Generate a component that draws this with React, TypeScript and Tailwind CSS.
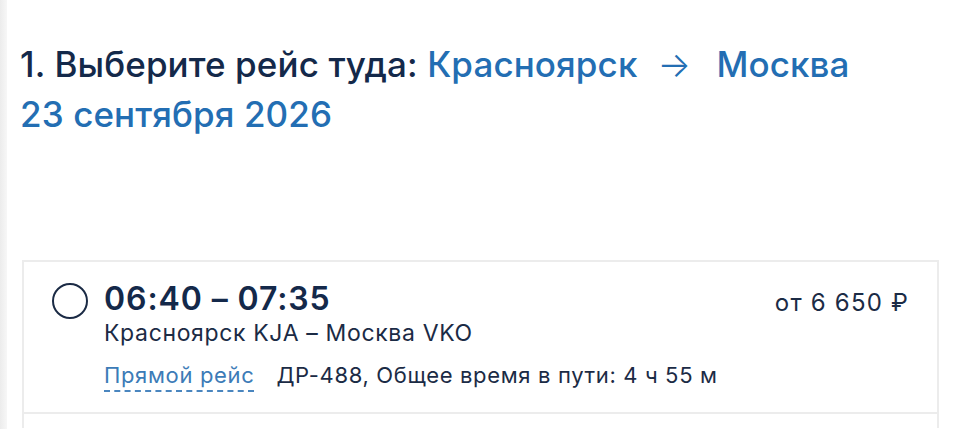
export default function App() {
  return (
    <div
      className="flex min-h-screen bg-white"
      style={{ fontFamily: "Inter, 'Noto Sans', sans-serif" }}
    >
      {/* left edge shade */}
      <div className="w-[7px] shrink-0 bg-gradient-to-r from-[#ececec] to-[#f7f7f7]"></div>

      <main className="flex-1 pl-[13px] pr-[21px] pt-[39px]">
        <h1 className="text-[35px] leading-[50px] font-medium tracking-[0.1px] text-[#14294a]">
          1. Выберите рейс туда:{" "}
          <span className="text-[#236eb3]">
            Красноярск
            <span className="ml-[20px] mr-[16px] font-light">→</span>
            &nbsp;Москва
          </span>
          <br />
          <span className="text-[#236eb3]">23 сентября 2026</span>
        </h1>

        <div className="mt-[121px] ml-[2px] border-2 border-b-0 border-[#ececec]">
          <div className="flex items-start justify-between border-b-2 border-[#ececec] pl-[28px] pr-[28px] pt-[18px] pb-[20px]">
            <div className="flex items-start gap-[16px]">
              <div className="mt-[3px] h-[36px] w-[36px] shrink-0 rounded-full border-2 border-[#1b2b45]"></div>
              <div>
                <div className="text-[32px] leading-[38px] font-semibold tracking-[0.9px] text-[#14294a]">
                  06:40 – 07:35
                </div>
                <div className="text-[23px] leading-[30px] tracking-[0.65px] text-[#1b2b45]">
                  Красноярск KJA – Москва VKO
                </div>
                <div className="mt-[14px] flex items-baseline gap-[22px] text-[22px] leading-[26px] tracking-[0.65px]">
                  <span className="border-b-2 border-dashed border-[#4a86bf] pb-[2px] text-[#3c7bb7]">
                    Прямой рейс
                  </span>
                  <span className="text-[#1b2b45]">
                    ДР-488, Общее время в пути: 4 ч 55 м
                  </span>
                </div>
              </div>
            </div>
            <div className="mt-[8px] text-[24px] leading-[30px] tracking-[1.2px] text-[#1b2b45]">
              от 6 650 ₽
            </div>
          </div>
          <div className="h-[14px]"></div>
        </div>
      </main>
    </div>
  )
}
